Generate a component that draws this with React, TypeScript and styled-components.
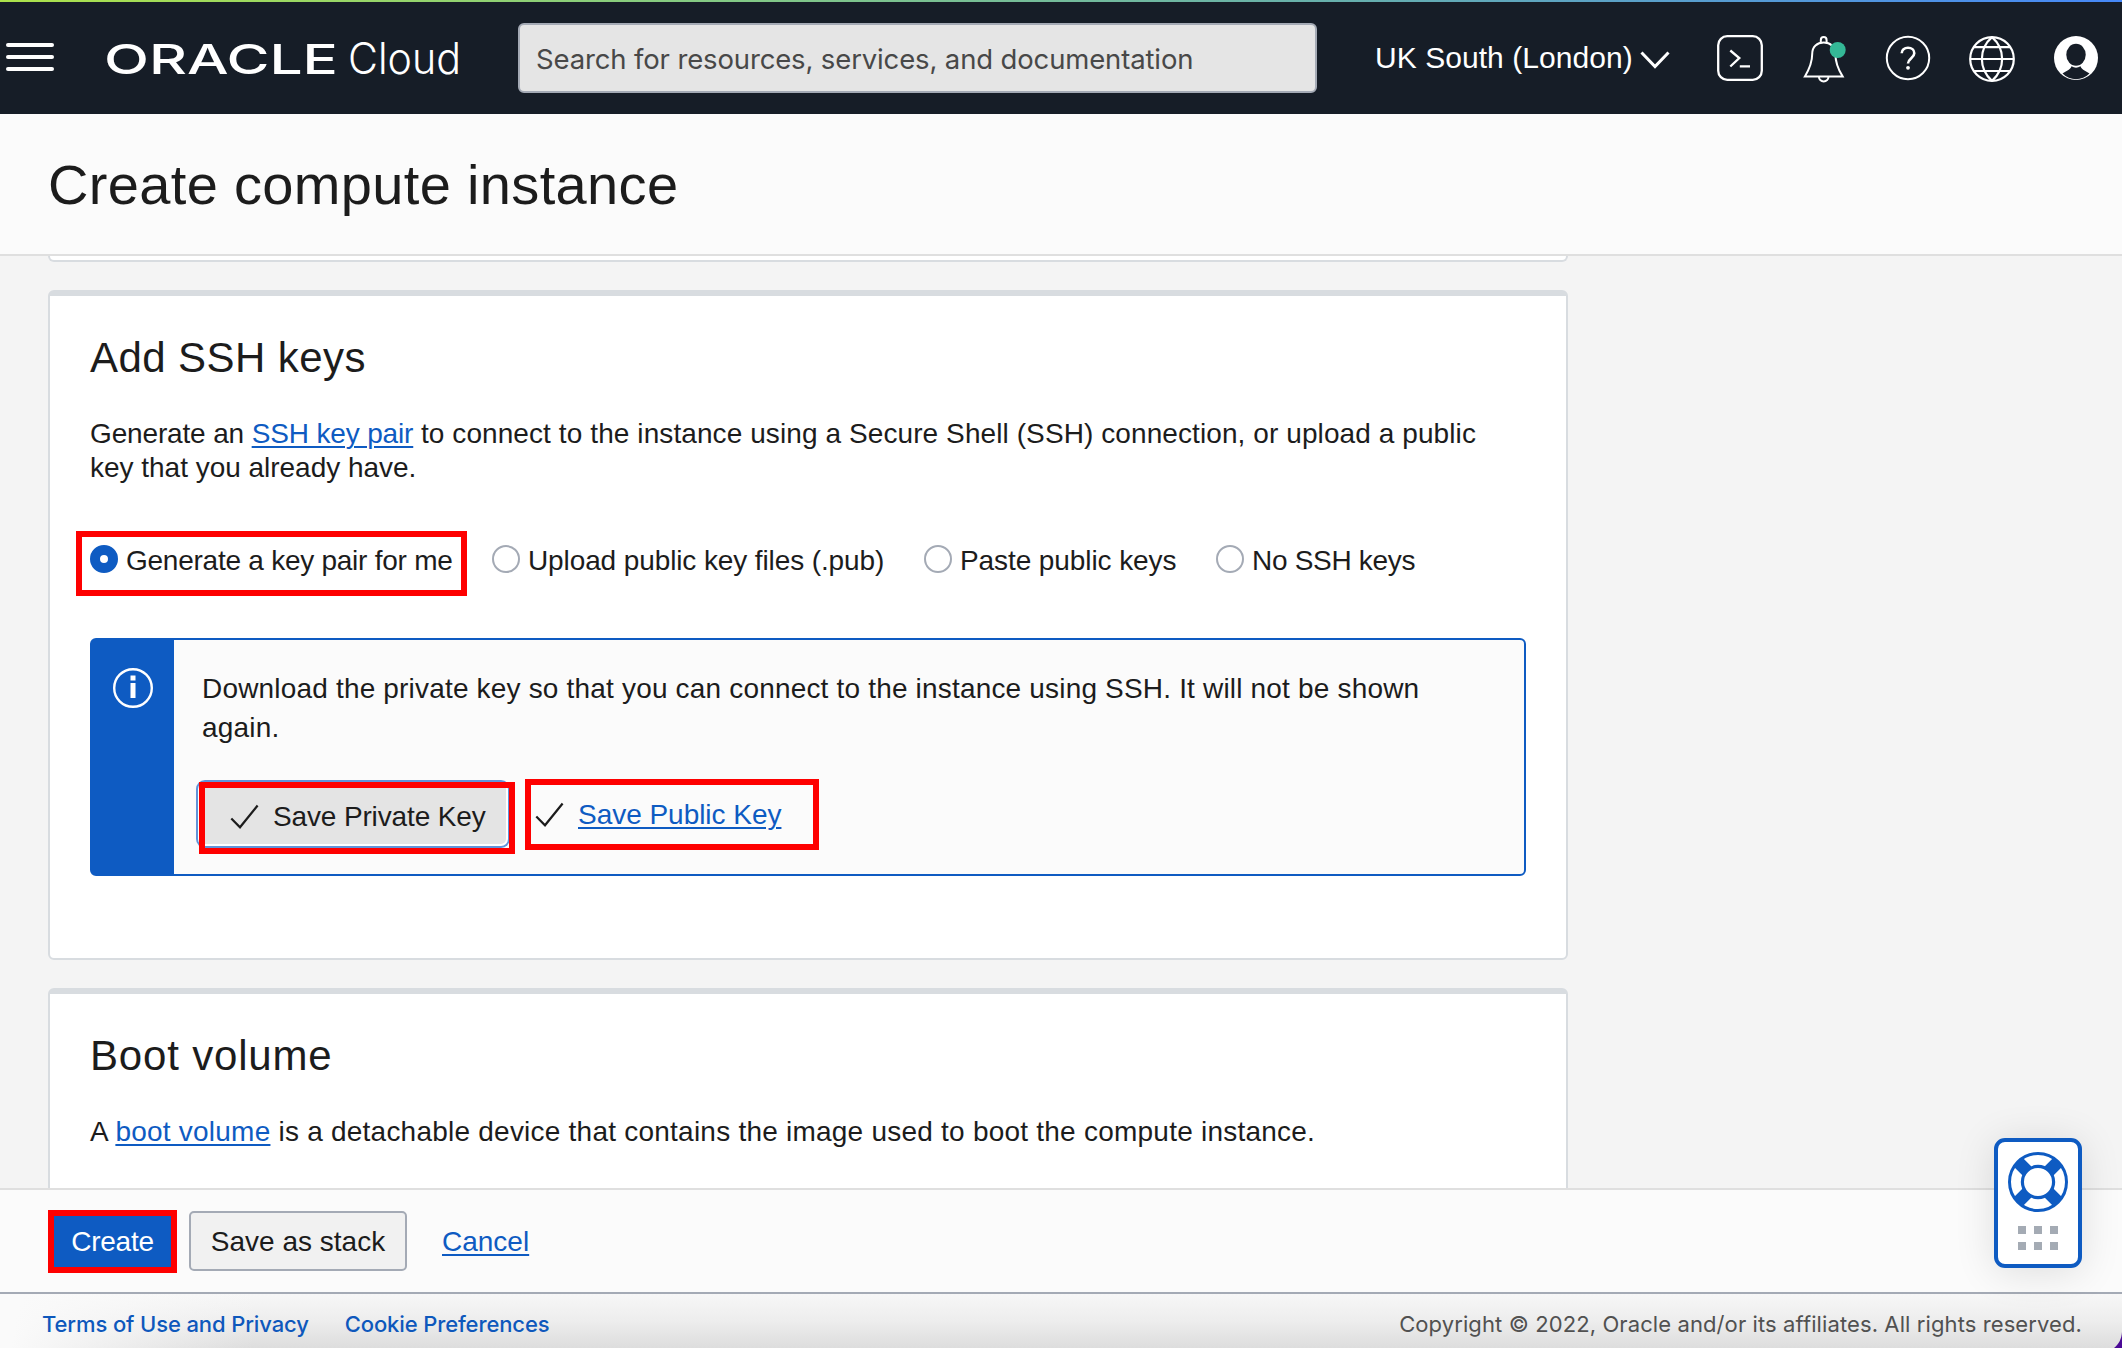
import React from "react";
import styled, { createGlobalStyle } from "styled-components";

const BLUE = "#0e5bc2";
const sans = `"Liberation Sans", Arial, sans-serif`;
const ui = `Inter, "Open Sans", sans-serif`;

const GlobalStyle = createGlobalStyle`
  *, *::before, *::after { box-sizing: border-box; }
  body { margin: 0; background: #f4f4f4; }
`;

const Page = styled.div`
  position: relative;
  display: flex;
  flex-direction: column;
  width: 2122px;
  height: 1348px;
  overflow: hidden;
  background: #f4f4f4;
  color: #1c1c1c;
  font: 28px/34px ${sans};
`;

const Accent = styled.div`
  flex: none;
  height: 2px;
  background: linear-gradient(90deg, #ace24b 0%, #84ca83 33%, #66afae 64%, #4688f8 100%);
`;

const Header = styled.header`
  flex: none;
  display: flex;
  align-items: center;
  height: 112px;
  padding-left: 6px;
  background: #161d27;
  color: #fff;
`;

const MenuButton = styled.div`
  display: flex;
  flex-direction: column;
  justify-content: space-between;
  width: 48px;
  height: 28px;
  margin: -2px 50px 0 0;
`;

const MenuLine = styled.span`
  height: 4px;
  border-radius: 2px;
  background: #fff;
`;

const Logo = styled.svg`
  flex: none;
  width: 414px;
  height: 60px;
`;

const Search = styled.div`
  flex: none;
  width: 799px;
  height: 70px;
  padding: 0 16px;
  border: 2px solid #a4aab5;
  border-radius: 6px;
  background: #e5e5e5;
  color: #484848;
  font: 27.5px/68px ${ui};
  letter-spacing: -0.14px;
`;

const Region = styled.div`
  flex: none;
  display: flex;
  align-items: center;
  width: 324px;
  margin-left: 57px;
  padding-left: 1px;
  font-size: 30px;
  letter-spacing: 0.05px;
  white-space: nowrap;

  svg {
    margin: 4px 0 0 7px;
  }
`;

const IconCell = styled.div<{ $shift?: number }>`
  flex: none;
  display: flex;
  justify-content: center;
  width: 84px;
  padding-top: ${(p) => p.$shift ?? 0}px;
`;

const TitleBar = styled.div`
  flex: none;
  height: 142px;
  padding: 38px 48px 0;
  border-bottom: 2px solid #dfdfdf;
  background: #fbfbfb;
`;

const Title = styled.h1`
  margin: 0;
  font-size: 56px;
  line-height: 66px;
  font-weight: 400;
  letter-spacing: 0.34px;
`;

const Scroll = styled.main`
  flex: 1;
  min-height: 0;
  display: flex;
  flex-direction: column;
  align-items: flex-start;
  gap: 28px;
  padding-left: 48px;
  overflow: hidden;
`;

const PreviousCard = styled.div`
  flex: none;
  width: 1520px;
  height: 6px;
  border: solid #d8dce0;
  border-width: 0 2px 2px;
  border-radius: 0 0 6px 6px;
  background: #fff;
`;

const Card = styled.section<{ $height: number }>`
  flex: none;
  width: 1520px;
  height: ${(p) => p.$height}px;
  padding: 37px 40px 0;
  border: 2px solid #d8dce0;
  border-top-width: 6px;
  border-radius: 6px;
  background: #fff;
`;

const CardTitle = styled.h2<{ $spacing: number }>`
  margin: 0 0 34px;
  font-size: 42px;
  line-height: 50px;
  font-weight: 400;
  letter-spacing: ${(p) => p.$spacing}px;
`;

const Text = styled.p<{ $spacing: number; $leading?: number }>`
  margin: 0;
  line-height: ${(p) => p.$leading ?? 34}px;
  letter-spacing: ${(p) => p.$spacing}px;
`;

const Phrase = styled.span<{ $spacing: number }>`
  letter-spacing: ${(p) => p.$spacing}px;
`;

const Link = styled.a`
  color: ${BLUE};
  text-decoration: underline;
  text-decoration-thickness: 2px;
  text-underline-offset: 3px;
`;

const Radios = styled.div`
  display: grid;
  grid-template-columns: 402px 432px 292px auto;
  margin: 60px 0 65px;
`;

const RadioLabel = styled.label<{ $spacing: number }>`
  position: relative;
  display: flex;
  align-items: center;
  gap: 8px;
  height: 28px;
  letter-spacing: ${(p) => p.$spacing}px;
  white-space: nowrap;
`;

const RadioMark = styled.span<{ $checked: boolean }>`
  flex: none;
  width: 28px;
  height: 28px;
  border: ${(p) => (p.$checked ? `10px solid ${BLUE}` : "2px solid #a4aab5")};
  border-radius: 50%;
  background: #fff;
`;

const RadioText = styled.span`
  padding-top: 3px;
`;

const Highlight = styled.span<{ $left: number; $top: number; $width: number; $height: number }>`
  position: absolute;
  left: ${(p) => p.$left}px;
  top: ${(p) => p.$top}px;
  width: ${(p) => p.$width}px;
  height: ${(p) => p.$height}px;
  border: 6px solid #fe0000;
`;

const Notice = styled.div`
  display: flex;
  height: 238px;
  border: 2px solid ${BLUE};
  border-radius: 6px;
  background: #fbfbfb;
`;

const NoticeStripe = styled.div`
  flex: none;
  width: 82px;
  padding: 28px 0 0 21px;
  background: ${BLUE};
`;

const NoticeBody = styled.div`
  flex: 1;
  padding: 29px 40px 0 28px;
`;

const NoticeActions = styled.div`
  display: flex;
  align-items: center;
  margin: 37px 0 0 -2px;
  height: 60px;
`;

const SaveButton = styled.button`
  position: relative;
  display: flex;
  align-items: center;
  gap: 14px;
  width: 306px;
  height: 60px;
  margin: 0;
  padding: 5px 0 0 30px;
  border: 0;
  border-radius: 5px;
  background: #e4e4e4;
  box-shadow: 0 0 0 2px #fff, 0 0 0 4px #6193d9;
  color: #1c1c1c;
  font: 28px/34px ${sans};
  letter-spacing: -0.14px;
  white-space: nowrap;
`;

const SavePublic = styled.div`
  position: relative;
  display: flex;
  align-items: center;
  gap: 14px;
  margin-left: 29px;
  padding-top: 2px;
  white-space: nowrap;
  letter-spacing: -0.03px;
`;

const ActionBar = styled.div`
  flex: none;
  display: flex;
  align-items: center;
  height: 104px;
  padding: 0 0 0 50px;
  border-top: 2px solid #dfdfdf;
  background: #fbfbfb;
`;

const ActionButton = styled.button<{ $primary?: boolean }>`
  position: relative;
  width: ${(p) => (p.$primary ? 125 : 218)}px;
  height: 60px;
  margin: 0 14px 0 0;
  padding: 1px 0 0;
  border: 2px solid ${(p) => (p.$primary ? BLUE : "#a4aab5")};
  border-radius: 5px;
  background: ${(p) => (p.$primary ? BLUE : "#f1f1f1")};
  color: ${(p) => (p.$primary ? "#fff" : "#1c1c1c")};
  font: 28px/34px ${sans};
  letter-spacing: ${(p) => (p.$primary ? -0.25 : 0)}px;
`;

const CancelLink = styled(Link)`
  margin: 2px 0 0 21px;
`;

const Footer = styled.footer`
  flex: none;
  display: flex;
  align-items: center;
  height: 56px;
  padding: 6px 40px 0 42px;
  border-top: 2px solid #a4aab5;
  background:
    linear-gradient(100deg, #fafafa 20px, rgba(250, 250, 250, 0) 260px),
    linear-gradient(180deg, #f7f7f7 0%, #ededed 50%, #dddddd 100%);
  font: 22px/30px ${ui};
`;

const FooterLink = styled.a`
  margin-right: 36px;
  color: #0e58bc;
  font-weight: 450;
  letter-spacing: -0.12px;
`;

const Copyright = styled.span`
  margin-left: auto;
  color: #515151;
  letter-spacing: 0.1px;
`;

const HelpWidget = styled.div`
  position: absolute;
  left: 1994px;
  top: 1138px;
  display: flex;
  flex-direction: column;
  align-items: center;
  width: 88px;
  height: 130px;
  padding-top: 10px;
  border: 4px solid ${BLUE};
  border-radius: 11px;
  background: #fff;
  box-shadow: 0 4px 40px rgba(0, 0, 0, 0.12);
`;

const Dots = styled.div`
  display: grid;
  grid-template-columns: repeat(3, 8px);
  grid-auto-rows: 8px;
  gap: 8px;
  margin-top: 14px;
`;

const Dot = styled.i`
  background: #a4abb4;
`;

const Corner = styled.svg`
  position: absolute;
  right: 0;
  bottom: 0;
`;

const CheckIcon = () => (
  <svg width="29" height="26" viewBox="0 0 29 26" fill="none" stroke="#1c1c1c" strokeWidth="2.2">
    <path d="M1.3 14.5 10 23.3 27.6 1.5" />
  </svg>
);

const radios = [
  { label: "Generate a key pair for me", spacing: -0.25 },
  { label: "Upload public key files (.pub)", spacing: -0.11 },
  { label: "Paste public keys", spacing: -0.09 },
  { label: "No SSH keys", spacing: -0.3 },
];

export default function App() {
  return (
    <Page>
      <GlobalStyle />
      <Accent />
      <Header>
        <MenuButton>
          <MenuLine />
          <MenuLine />
          <MenuLine />
        </MenuButton>
        <Logo viewBox="0 0 414 60" fill="#fff">
          <text x="0" y="46" fontFamily="Inter, sans-serif" fontSize="41" fontWeight="550" textLength="234" lengthAdjust="spacingAndGlyphs">ORACLE</text>
          <text x="244" y="46" fontFamily="Inter, sans-serif" fontSize="43" fontWeight="270" textLength="113" lengthAdjust="spacingAndGlyphs">Cloud</text>
        </Logo>
        <Search>Search for resources, services, and documentation</Search>
        <Region>
          UK South (London)
          <svg width="30" height="18" viewBox="0 0 30 18" fill="none" stroke="#fff" strokeWidth="3">
            <path d="M1.5 1.5 15 15.5 28.5 1.5" />
          </svg>
        </Region>
        <IconCell>
          <svg width="46" height="46" viewBox="0 0 46 46" fill="none" stroke="#fff" strokeWidth="2.3">
            <rect x="1.2" y="1.2" width="43.6" height="43.6" rx="9" />
            <path d="M13.3 15.5 22.3 23 13.3 31.5M22.8 31.3H33" />
          </svg>
        </IconCell>
        <IconCell $shift={3}>
          <svg width="46" height="48" viewBox="-3 0 46 48" fill="none" stroke="#fff" strokeWidth="2">
            <path d="M.9 40.4C4.5 34.5 8.2 28 8.2 18c0-7.5 5-11.5 11.5-11.5S31.400 10.5 31.4 18c0 10 3.5 16.5 7.200 22.400Z" />
            <path d="M16.8 6.8V4.200a2.900 3.100 0 0 1 5.800 0v2.600M14.900 40.600a4.800 4.800 0 0 0 9.600 0" />
            <circle cx="33.7" cy="14" r="8" fill="#34b896" stroke="none" />
          </svg>
        </IconCell>
        <IconCell>
          <svg width="46" height="46" viewBox="0 0 46 46" fill="none" stroke="#fff" strokeWidth="2">
            <circle cx="23" cy="23" r="21.2" />
            <path strokeWidth="2.6" d="M16.7 18.2c0-3.4 2.7-5.500 6.300-5.500s6.300 2.200 6.300 5.500c0 4.600-6.300 5.400-6.300 10.300" />
            <circle cx="23" cy="32.8" r="1.9" fill="#fff" stroke="none" />
          </svg>
        </IconCell>
        <IconCell $shift={2}>
          <svg width="46" height="46" viewBox="0 0 46 46" fill="none" stroke="#fff" strokeWidth="2.2">
            <circle cx="23" cy="23" r="21.8" />
            <path d="M5 11.200h36M1 23h44M5 35h36M23 1.200C9.500 13 9.500 33 23 44.800M23 1.200C36.500 13 36.500 33 23 44.800" />
          </svg>
        </IconCell>
        <IconCell>
          <svg width="46" height="46" viewBox="0 0 46 46">
            <circle cx="23" cy="23" r="22" fill="#fff" />
            <ellipse cx="23" cy="19.8" rx="9.7" ry="11" fill="#161d27" />
            <path d="M9.500 38.500c3-2.200 7.500-3 9-7.200 3 1.800 6 1.800 9 0 1.500 4.200 6 5 9 7.200C29 46 17 46 9.500 38.500Z" fill="#161d27" />
          </svg>
        </IconCell>
      </Header>

      <TitleBar>
        <Title>Create compute instance</Title>
      </TitleBar>

      <Scroll>
        <PreviousCard />
        <Card $height={670}>
          <CardTitle $spacing={0.43}>Add SSH keys</CardTitle>
          <Text $spacing={0.09}>
            <Phrase $spacing={-0.15}>
              Generate an <Link>SSH key pair</Link>{" "}
            </Phrase>
            to connect to the instance using a Secure Shell (SSH) connection, or upload a public
            <br />
            <Phrase $spacing={-0.02}>key that you already have.</Phrase>
          </Text>
          <Radios>
            {radios.map(({ label, spacing }, i) => (
              <RadioLabel key={label} $spacing={spacing}>
                <RadioMark $checked={i === 0} />
                <RadioText>{label}</RadioText>
                {i === 0 && <Highlight $left={-14} $top={-14} $width={391} $height={65} />}
              </RadioLabel>
            ))}
          </Radios>
          <Notice>
            <NoticeStripe>
              <svg width="40" height="40" viewBox="0 0 40 40" fill="none" stroke="#fff">
                <circle cx="20" cy="20" r="18.8" strokeWidth="2.4" />
                <path d="M20 7.500v5M20 15v15" strokeWidth="5" />
              </svg>
            </NoticeStripe>
            <NoticeBody>
              <Text $spacing={0.18} $leading={39}>
                Download the private key so that you can connect to the instance using SSH. It will not be shown
                <br />
                again.
              </Text>
              <NoticeActions>
                <SaveButton>
                  <CheckIcon />
                  Save Private Key
                  <Highlight $left={-1} $top={-2} $width={316} $height={72} />
                </SaveButton>
                <SavePublic>
                  <CheckIcon />
                  <Link>Save Public Key</Link>
                  <Highlight $left={-10} $top={-17} $width={294} $height={71} />
                </SavePublic>
              </NoticeActions>
            </NoticeBody>
          </Notice>
        </Card>
        <Card $height={300}>
          <CardTitle $spacing={0.82}>Boot volume</CardTitle>
          <Text $spacing={0.23}>
            A <Link>boot volume</Link> is a detachable device that contains the image used to boot the compute instance.
          </Text>
        </Card>
      </Scroll>

      <ActionBar>
        <ActionButton $primary>
          Create
          <Highlight $left={-4} $top={-3} $width={129} $height={63} />
        </ActionButton>
        <ActionButton>Save as stack</ActionButton>
        <CancelLink>Cancel</CancelLink>
      </ActionBar>
      <Footer>
        <FooterLink>Terms of Use and Privacy</FooterLink>
        <FooterLink>Cookie Preferences</FooterLink>
        <Copyright>Copyright © 2022, Oracle and/or its affiliates. All rights reserved.</Copyright>
      </Footer>

      <HelpWidget>
        <svg width="60" height="60" viewBox="-30 -30 60 60" fill="none" stroke={BLUE}>
          <circle r="28.5" strokeWidth="3" />
          <path d="M-20-20-11-11M20-20 11-11M-20 20-11 11M20 20 11 11" strokeWidth="12.5" />
          <circle r="15.6" strokeWidth="3.2" fill="#fff" />
        </svg>
        <Dots>
          {[0, 1, 2, 3, 4, 5].map((n) => (
            <Dot key={n} />
          ))}
        </Dots>
      </HelpWidget>
      <Corner width="8" height="16" viewBox="0 0 8 16">
        <path d="M8 0C7.500 7 5 12 0 16H8Z" fill="#4b0a96" />
      </Corner>
    </Page>
  );
}
